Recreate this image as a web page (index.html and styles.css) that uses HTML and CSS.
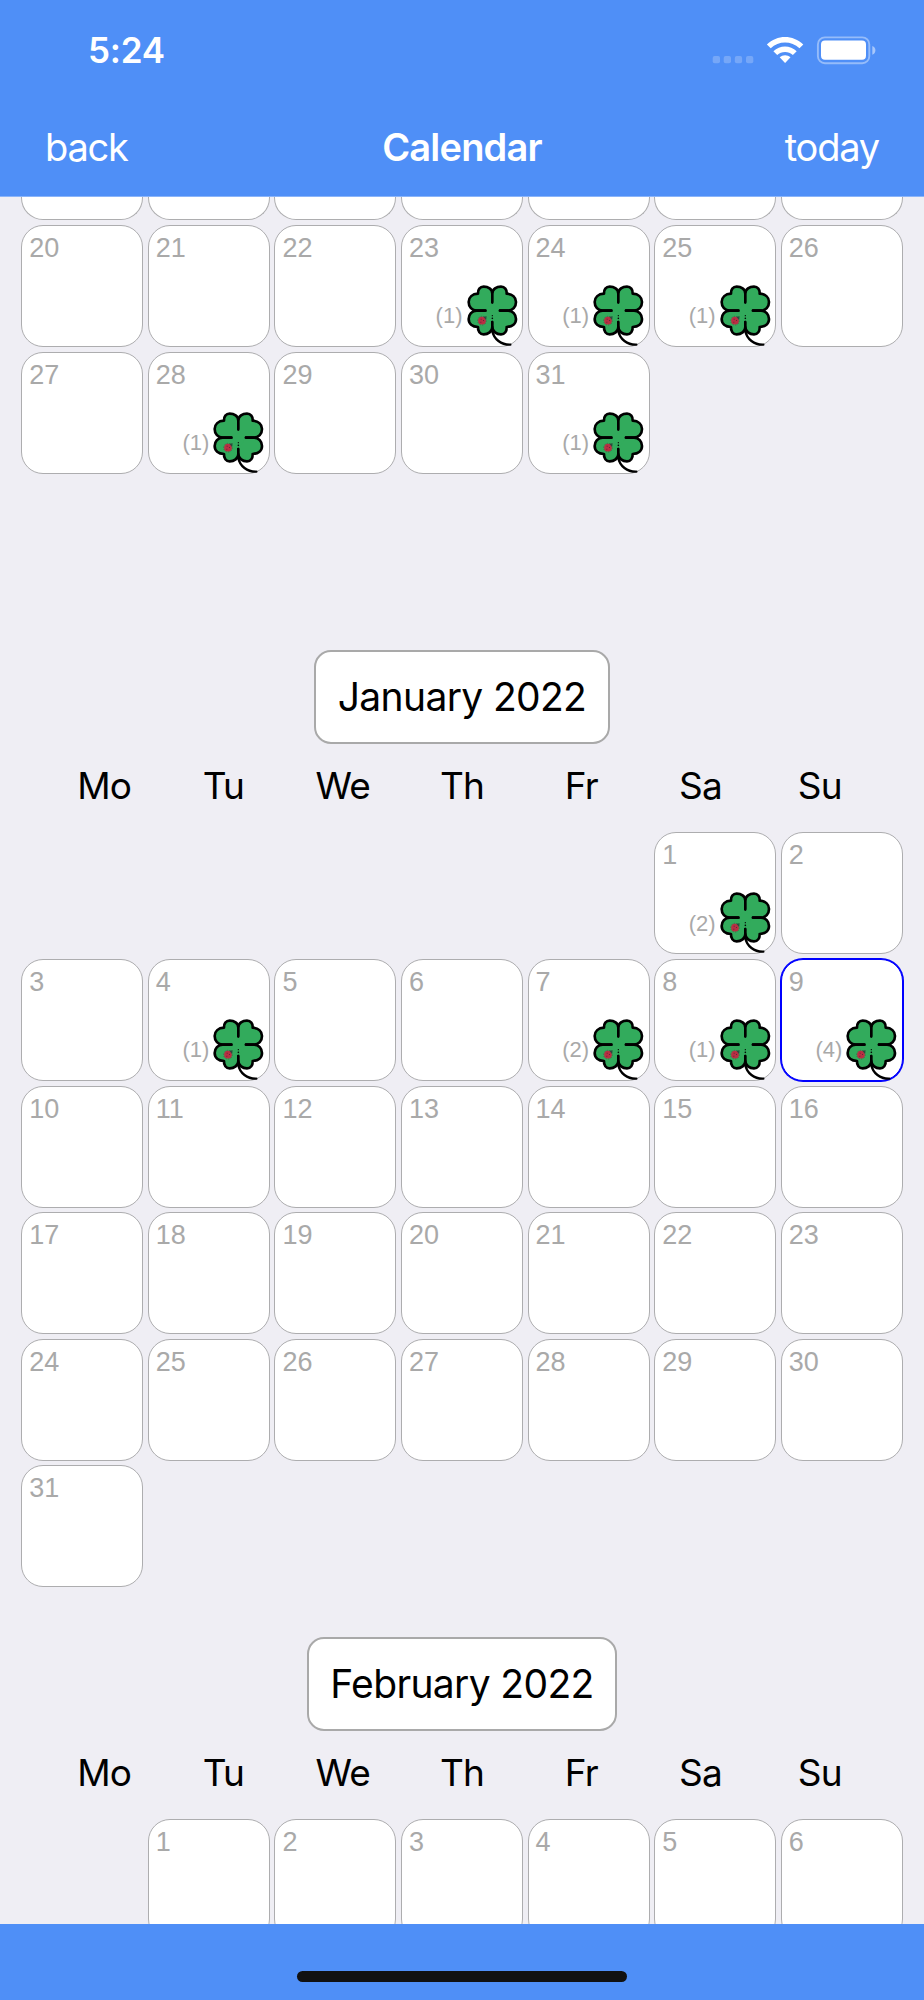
FILE: index.html
```
<!DOCTYPE html>
<html lang="en">
<head>
  <meta charset="UTF-8">
  <meta name="viewport" content="width=device-width, initial-scale=1.0">
  <title>Calendar</title>
  <link rel="stylesheet" href="styles.css">
</head>
<body>

<svg class="symbols" width="0" height="0">
  <symbol id="clover" viewBox="0 0 153 183">
    <g fill="#32ab5c" stroke="#000" stroke-width="8" stroke-linecap="round" stroke-linejoin="round">
      <path stroke="none" d="M76 26L40 28L28 78L40 125L76 130L112 125L124 78L112 28Z"/>
      <path d="M76 52V26C76 12 63 5 50 5C39 5 32 14 33 26C16 27 5 37 5 51C5 66 15 77 29 77H55"/>
      <path d="M76 52V26C76 12 89 5 102 5C113 5 120 14 119 26C136 27 147 37 147 51C147 66 137 77 123 77H99"/>
      <path d="M55 77H29C15 77 5 88 5 102C5 116 16 125 33 126C32 139 39 148 50 148C63 148 76 140 76 126V111"/>
      <path d="M99 77H123C137 77 147 88 147 102C147 116 136 125 119 126C120 139 113 148 102 148C89 148 76 140 76 126V111"/>
      <path fill="none" stroke-width="7" d="M76 126V138C80 162 103 180 130 179"/>
    </g>
    <circle cx="76" cy="92" r="2"/>
    <circle cx="76" cy="100" r="2.5"/>
    <circle cx="45" cy="107" r="13" fill="none" stroke="#4a5549" stroke-width="3" stroke-dasharray="3 5"/>
    <circle cx="45" cy="107" r="11.5" fill="#b92f43"/>
    <path d="M49 95l10-1l-2 11z" fill="#2c4b3e"/>
    <path d="M41 101h3v3h-3zM48 105h3v3h-3zM40 110h3v3h-3z" fill="#64243a"/>
  </symbol>
</svg>

<header class="header">
  <div class="status">
    <span class="time">5:24</span>
    <svg width="166" height="30" viewBox="0 0 166 30" fill="#fff">
      <g opacity="0.22">
        <rect x="0.7" y="21" width="7.3" height="7.3" rx="2"/>
        <rect x="11.7" y="21" width="7.3" height="7.3" rx="2"/>
        <rect x="22.8" y="21" width="7.3" height="7.3" rx="2"/>
        <rect x="34" y="21" width="7.3" height="7.3" rx="2"/>
      </g>
      <path d="M54.9 9.6C65 -0.4 81 -0.4 91.3 9.6L87.5 13.3C79.5 5.6 66.5 5.6 58.7 13.3Z"/>
      <path d="M61.4 16.2C67.7 9.9 78.3 9.9 84.7 16.2L80.9 19.9C76.6 15.9 69.4 15.9 65.2 19.9Z"/>
      <path d="M67.7 22.3C70.7 19.4 75.5 19.4 78.5 22.3L73.1 28Z"/>
      <rect x="105.9" y="2.4" width="51.4" height="25.8" rx="7" fill="none" stroke="#fff" stroke-width="1.9" opacity="0.4"/>
      <rect x="109" y="5.6" width="45" height="19.2" rx="4"/>
      <path d="M160.3 11C164.5 12.5 164.5 18 160.3 19.8Z" opacity="0.5"/>
    </svg>
  </div>
  <nav class="nav">
    <a class="back">back</a>
    <h1>Calendar</h1>
    <a class="today-link">today</a>
  </nav>
</header>

<main class="months" id="months"></main>

<footer class="footer">
  <div class="home-bar"></div>
</footer>

<script>
  // first/last: days in view, offset: empty cells before the first one, counts: entries per day
  const months = [
    { first: 20, last: 31, offset: 0, counts: { 23: 1, 24: 1, 25: 1, 28: 1, 31: 1 } },
    { title: 'January 2022', first: 1, last: 31, offset: 5, today: 9, counts: { 1: 2, 4: 1, 7: 2, 8: 1, 9: 4 } },
    { title: 'February 2022', first: 1, last: 6, offset: 1, counts: {} }
  ];
  const weekdays = ['Mo', 'Tu', 'We', 'Th', 'Fr', 'Sa', 'Su'];

  function renderDay(day, month) {
    const count = month.counts[day];
    const entry = count
      ? `<div class="entry"><span class="count">(${count})</span><svg class="clover"><use href="#clover"/></svg></div>`
      : '';
    return `<div class="day ${day === month.today ? 'today' : ''}"><span class="date">${day}</span>${entry}</div>`;
  }

  function renderMonth(month) {
    let days = '<div></div>'.repeat(month.offset);
    for (let day = month.first; day <= month.last; day++) {
      days += renderDay(day, month);
    }
    if (!month.title) {
      const rest = '<div class="day"></div>'.repeat(7);
      return `<section class="month scrolled"><div class="days week-end">${rest}</div><div class="days">${days}</div></section>`;
    }
    const names = weekdays.map(d => `<span>${d}</span>`).join('');
    return `<section class="month"><h2>${month.title}</h2><div class="weekdays">${names}</div><div class="days">${days}</div></section>`;
  }

  document.getElementById('months').innerHTML = months.map(renderMonth).join('');
</script>

</body>
</html>
```
FILE: styles.css
```
* {
  box-sizing: border-box;
}
body {
  display: flex;
  flex-direction: column;
  height: 2000px;
  margin: 0;
  background: #efeef4;
  color: #000;
  font-family: Inter, "Liberation Sans", sans-serif;
  overflow: hidden;
}
.symbols {
  display: none;
}
.header {
  flex: none;
  height: 197px;
  background: #4f8ff7;
  border-bottom: 1px solid #8ab4f9;
  color: #fff;
}
.status {
  display: flex;
  justify-content: space-between;
  align-items: center;
  height: 100px;
  padding: 0 46px 0 88px;
}
.time {
  font-size: 35px;
  font-weight: 600;
  letter-spacing: -0.2px;
}
.nav {
  display: grid;
  grid-template-columns: 1fr auto 1fr;
  align-items: center;
  height: 94px;
  padding: 0 45px;
  font-size: 38px;
}
.nav a {
  letter-spacing: -1.2px;
}
.nav h1 {
  margin: 0;
  font-size: 38px;
  font-weight: 600;
  letter-spacing: -0.8px;
}
.today-link {
  text-align: right;
}
.months {
  flex: 1;
  min-height: 0;
  overflow: hidden;
}
.month {
  display: flex;
  flex-direction: column;
  align-items: center;
  height: 987px;
}
.scrolled {
  gap: 4.6px;
  height: 453.4px;
}
.month h2 {
  flex: none;
  height: 94px;
  margin: 0;
  padding: 0 21.5px;
  background: #fff;
  border: 2px solid #a9a9a9;
  border-radius: 17px;
  font-size: 39px;
  font-weight: 400;
  line-height: 89px;
  letter-spacing: -0.65px;
}
.weekdays {
  display: flex;
  flex: none;
  width: 835px;
  height: 88px;
  font-size: 37px;
  line-height: 83px;
  letter-spacing: -0.8px;
}
.weekdays span {
  flex: 1;
  text-align: center;
}
.days {
  display: grid;
  grid-template-columns: repeat(7, 122px);
  grid-auto-rows: 122px;
  gap: 4.6px;
}
.day {
  display: flex;
  flex-direction: column;
  justify-content: space-between;
  padding: 6px 4.5px 0 7px;
  background: #fff;
  border: 1px solid #adadaf;
  border-radius: 22px;
  color: #a9a9a9;
  font-family: "Liberation Sans", sans-serif;
}
/* bottom of the week that is scrolled under the header */
.week-end {
  grid-auto-rows: 23.4px;
}
.week-end .day {
  border-top: none;
  border-radius: 0 0 22px 22px;
}
.today {
  border-color: #00f;
  box-shadow: 0 0 0 1px #00f;
}
.date {
  font-size: 27px;
  line-height: 33px;
}
.entry {
  display: flex;
  justify-content: flex-end;
  align-items: center;
  gap: 4px;
}
.count {
  padding-top: 2px;
  font-size: 22px;
}
.clover {
  width: 51px;
  height: 61px;
}
.footer {
  display: flex;
  flex: none;
  justify-content: center;
  align-items: center;
  height: 76px;
  padding-top: 29px;
  background: #4f8ff7;
}
.home-bar {
  width: 330px;
  height: 11px;
  background: #111;
  border-radius: 6px;
}
```
